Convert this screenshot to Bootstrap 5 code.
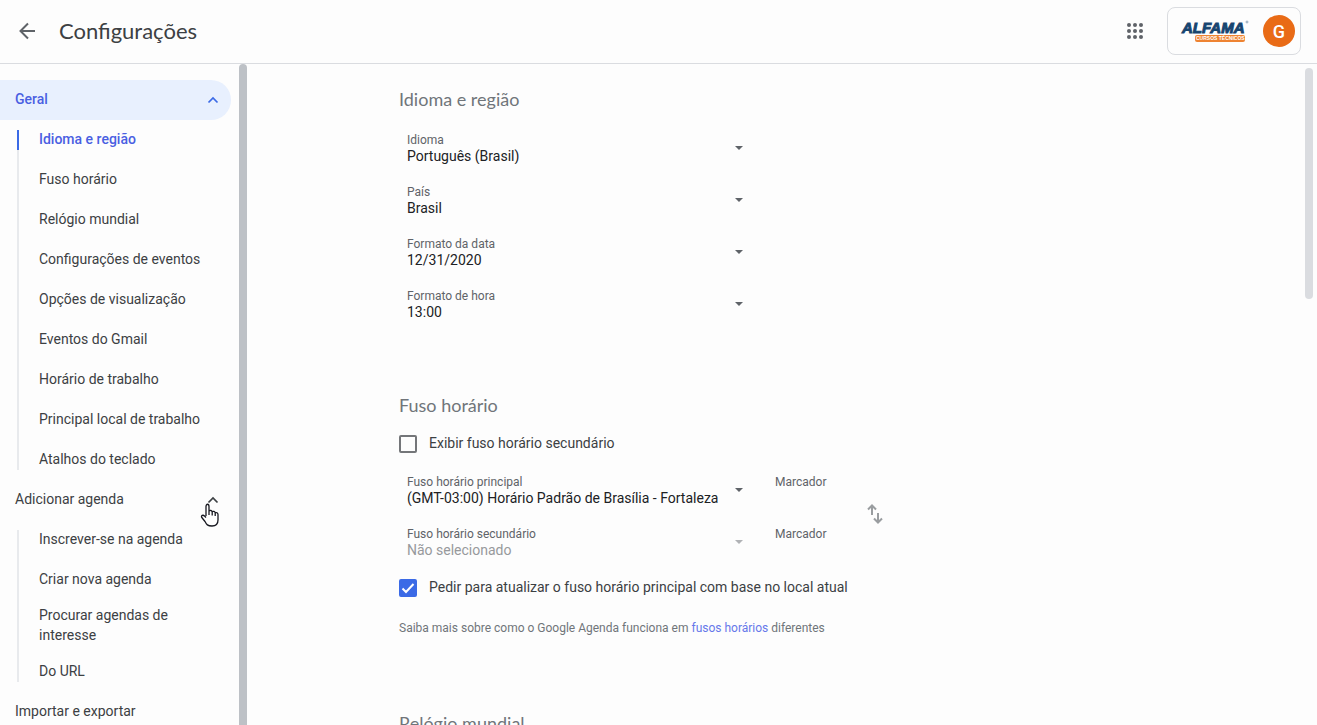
<!DOCTYPE html>
<html lang="pt-BR">
<head>
<meta charset="utf-8">
<meta name="viewport" content="width=device-width, initial-scale=1">
<title>Configurações</title>
<link href="https://cdn.jsdelivr.net/npm/bootstrap@5.3.0/dist/css/bootstrap.min.css" rel="stylesheet">
<style>
  body { font-family: Roboto, "Liberation Sans", sans-serif; font-size: 14px; line-height: 20px; color: #3c4043; background: #fdfdfd; }
  a { color: inherit; text-decoration: none; }
  .topbar { height: 64px; padding: 0 16px 1px; border-bottom: 1px solid #dadce0; }
  .icon-btn { border: 0; background: none; padding: 0; color: #5f6368; display: flex; }
  .page-title { font: 400 22px/28px Lato, sans-serif; color: #3c4043; margin: 0 0 0 19px; }
  .account { border: 1px solid #dadce0; border-radius: 8px; height: 48px; padding: 0 5px 0 13px; }
  .avatar { width: 32px; height: 32px; background: #e96b16; color: #fff; font-size: 18px; font-weight: 500; }

  .side-pane { width: 247px; }
  .scroller { overflow-y: auto; scrollbar-width: none; }
  .scroller::-webkit-scrollbar { display: none; }
  .side-thumb { width: 8px; background: #bdc1c6; border-radius: 4px 4px 0 0; }
  .main-thumb { width: 8px; height: 35%; background: #dadce0; border-radius: 4px; margin: 4px 4px 0 0; }

  .group-head { border: 0; background: none; color: inherit; text-align: left; width: 231px; height: 40px; padding: 0 12px 2px 15px; border-radius: 0 20px 20px 0; }
  .group-head.current { background: #e8f0fe; color: #4a5fe2; font-weight: 500; }
  .group-head.current svg { color: #3b6ae6; }
  .group-head svg { margin-top: 2px; }
  .sub-nav { position: relative; padding-left: 39px; }
  .sub-nav::before { content: ""; position: absolute; left: 17px; top: 10px; bottom: 10px; width: 2px; background: #e8eaed; }
  .sub-nav a { display: flex; align-items: center; min-height: 40px; padding: 5px 24px 7px 0; }
  .sub-nav a.current { color: #4a5fe2; font-weight: 500; }
  .sub-nav a.current::before { content: ""; position: absolute; left: 17px; top: 10px; width: 2px; height: 20px; background: #3b6ae6; }
  .pointer { position: absolute; right: 19px; top: 22px; z-index: 2; }

  .settings { padding: 24px 24px 24px 152px; }
  .settings section { margin-bottom: 74px; }
  .settings h2 { font: 400 18px/22px Lato, sans-serif; color: #70757a; margin: 0; }
  .fields { display: grid; gap: 20px; width: 352px; }
  .field { position: relative; padding: 0 8px; }
  .field label { display: block; font-size: 12px; line-height: 16px; color: #5f6368; }
  .field select, .field input { display: block; width: 100%; height: 16px; padding: 0; border: 0; outline: 0; background: none; appearance: none; font-size: 14px; line-height: 16px; color: #202124; opacity: 1; }
  .field select:disabled { color: #97999c; }
  .caret { position: absolute; right: 8px; top: 14px; pointer-events: none; color: #5f6368; }
  .field select:disabled + .caret { color: #b0b2b5; }
  .language-fields { margin-top: 22px; }
  .zone-fields { margin: 19px 0; }
  .markers { width: 84px; }
  .tick { appearance: none; width: 18px; height: 18px; margin: 0; border: 2px solid #747679; border-radius: 2px; flex: none; }
  .tick:checked { border-color: #3b6ae6; background: #3b6ae6 url("data:image/svg+xml,%3Csvg xmlns='http://www.w3.org/2000/svg' viewBox='0 0 14 14'%3E%3Cpath d='M1.5 7.5 5 11l7.5-8' fill='none' stroke='white' stroke-width='2'/%3E%3C/svg%3E") center/14px no-repeat; }
  .check-row { display: flex; align-items: center; margin-top: 17px; }
  .check-row label { padding: 0 0 2px 12px; }
  .note { font-size: 12px; line-height: 20px; color: #70757a; margin: 19px 0 0; }
  .note a { color: #6678ea; }
</style>
</head>
<body>
<svg class="d-none" xmlns="http://www.w3.org/2000/svg">
  <symbol id="drop" viewBox="0 0 8 4"><path d="M0 0h8L4 4z" fill="currentColor"/></symbol>
  <symbol id="up" viewBox="0 0 12 12"><path d="M1.500 8.500 6 4l4.500 4.500" fill="none" stroke="currentColor" stroke-width="1.700"/></symbol>
</svg>
<div class="vh-100 d-flex flex-column overflow-hidden">
  <header class="topbar d-flex align-items-center flex-shrink-0">
    <button class="icon-btn" aria-label="Voltar">
      <svg width="24" height="24" viewBox="0 0 24 24"><path d="M19 12H5M12 4.500 4.500 12l7.500 7.500" fill="none" stroke="currentColor" stroke-width="2"/></svg>
    </button>
    <h1 class="page-title">Configurações</h1>
    <button class="icon-btn ms-auto me-4" aria-label="Google Apps">
      <svg width="16" height="16" viewBox="0 0 16 16" fill="currentColor"><circle cx="2" cy="2" r="2"/><circle cx="8" cy="2" r="2"/><circle cx="14" cy="2" r="2"/><circle cx="2" cy="8" r="2"/><circle cx="8" cy="8" r="2"/><circle cx="14" cy="8" r="2"/><circle cx="2" cy="14" r="2"/><circle cx="8" cy="14" r="2"/><circle cx="14" cy="14" r="2"/></svg>
    </button>
    <div class="account d-flex align-items-center gap-3">
      <svg class="overflow-visible" width="66" height="24" viewBox="0 0 66 24" role="img" aria-label="Alfama Cursos Técnicos">
        <text x="1" y="14" font-family="Liberation Sans, sans-serif" font-size="15" font-weight="700" font-style="italic" fill="#17446f" stroke="#17446f" stroke-width="1">ALFAMA</text>
        <circle cx="66" cy="3" r="1" fill="none" stroke="#5c7c9b" stroke-width=".6"/>
        <rect x="14" y="16" width="50" height="7" rx="2" fill="#ee8332"/>
        <text x="15" y="21" font-family="Liberation Sans, sans-serif" font-size="5" font-weight="700" fill="#fff">CURSOS TÉCNICOS</text>
      </svg>
      <button class="avatar btn p-0 rounded-circle border-0">G</button>
    </div>
  </header>

  <div class="d-flex flex-grow-1 overflow-hidden">
    <aside class="side-pane d-flex flex-shrink-0">
      <nav class="scroller flex-grow-1 pt-3">
        <button class="group-head current d-flex align-items-center justify-content-between">Geral <svg width="12" height="12"><use href="#up"/></svg></button>
        <div class="sub-nav">
          <a class="current" href="#idioma">Idioma e região</a>
          <a href="#fuso">Fuso horário</a>
          <a href="#relogio">Relógio mundial</a>
          <a href="#eventos">Configurações de eventos</a>
          <a href="#visual">Opções de visualização</a>
          <a href="#gmail">Eventos do Gmail</a>
          <a href="#trabalho">Horário de trabalho</a>
          <a href="#local">Principal local de trabalho</a>
          <a href="#atalhos">Atalhos do teclado</a>
        </div>
        <div class="position-relative">
          <button class="group-head d-flex align-items-center justify-content-between">Adicionar agenda <svg width="12" height="12"><use href="#up"/></svg></button>
          <svg class="pointer" width="20" height="26" viewBox="0 0 20 26"><path d="M6 14V4.500C6 1.500 9 1.500 9 4.500V9c1-1 3-.6 3.200.8 1-.8 2.700-.4 3 1 1.200-.6 2.800 0 2.800 1.700V18c0 4-2.500 6-6 6-4.500 0-5.500-1.500-7-4.500L1.800 15.500c-1-2 1.200-3 2.700-1.500L6 15.500M9 9v4m3.200-3v3.500m3-2.500v3" fill="#fff" stroke="#16171f" stroke-width="1.300" stroke-linejoin="round"/></svg>
        </div>
        <div class="sub-nav">
          <a href="#inscrever">Inscrever-se na agenda</a>
          <a href="#criar">Criar nova agenda</a>
          <a href="#procurar">Procurar agendas de interesse</a>
          <a href="#url">Do URL</a>
        </div>
        <button class="group-head d-flex align-items-center">Importar e exportar</button>
      </nav>
      <div class="side-thumb"></div>
    </aside>

    <main class="settings scroller flex-grow-1">
      <section id="idioma">
        <h2>Idioma e região</h2>
        <div class="fields language-fields">
          <div class="field"><label for="f1">Idioma</label><select id="f1"><option>Português (Brasil)</option></select><svg class="caret" width="8" height="4"><use href="#drop"/></svg></div>
          <div class="field"><label for="f2">País</label><select id="f2"><option>Brasil</option></select><svg class="caret" width="8" height="4"><use href="#drop"/></svg></div>
          <div class="field"><label for="f3">Formato da data</label><select id="f3"><option>12/31/2020</option></select><svg class="caret" width="8" height="4"><use href="#drop"/></svg></div>
          <div class="field"><label for="f4">Formato de hora</label><select id="f4"><option>13:00</option></select><svg class="caret" width="8" height="4"><use href="#drop"/></svg></div>
        </div>
      </section>
      <section id="fuso">
        <h2>Fuso horário</h2>
        <div class="check-row">
          <input class="tick" type="checkbox" id="c1"><label for="c1">Exibir fuso horário secundário</label>
        </div>
        <div class="zone-fields d-flex align-items-center gap-3">
          <div class="fields">
            <div class="field"><label for="f5">Fuso horário principal</label><select id="f5"><option>(GMT-03:00) Horário Padrão de Brasília - Fortaleza</option></select><svg class="caret" width="8" height="4"><use href="#drop"/></svg></div>
            <div class="field"><label for="f6">Fuso horário secundário</label><select id="f6" disabled><option>Não selecionado</option></select><svg class="caret" width="8" height="4"><use href="#drop"/></svg></div>
          </div>
          <div class="fields markers">
            <div class="field"><label for="m1">Marcador</label><input id="m1" type="text"></div>
            <div class="field"><label for="m2">Marcador</label><input id="m2" type="text"></div>
          </div>
          <button class="icon-btn" aria-label="Trocar fusos horários">
            <svg class="mb-1" width="16" height="20" viewBox="0 0 16 20" fill="none" stroke="#9a9da0" stroke-width="2"><path d="M5 11V2M1 5.500l4-4 4 4M11 9v9M7 14.500l4 4 4-4"/></svg>
          </button>
        </div>
        <div class="check-row">
          <input class="tick" type="checkbox" id="c2" checked><label for="c2">Pedir para atualizar o fuso horário principal com base no local atual</label>
        </div>
        <p class="note">Saiba mais sobre como o Google Agenda funciona em <a href="#fusos">fusos horários</a> diferentes</p>
      </section>
      <section id="relogio">
        <h2>Relógio mundial</h2>
      </section>
    </main>
    <div class="main-thumb flex-shrink-0"></div>
  </div>
</div>
<script src="https://cdn.jsdelivr.net/npm/bootstrap@5.3.0/dist/js/bootstrap.bundle.min.js"></script>
</body>
</html>
